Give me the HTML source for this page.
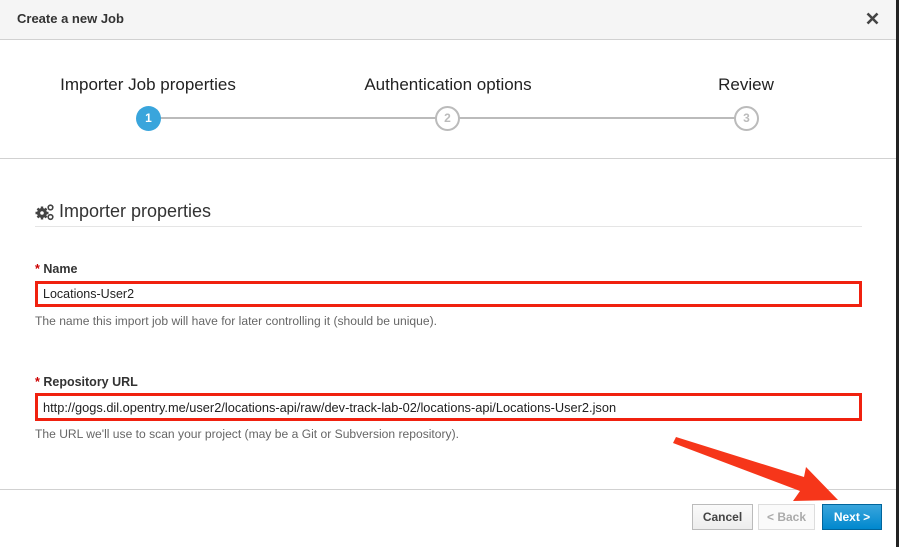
<!DOCTYPE html>
<html><head><style>
*{margin:0;padding:0;box-sizing:border-box}
body{width:899px;height:547px;background:#fff;font-family:"Liberation Sans",sans-serif;position:relative;overflow:hidden;color:#333}
.a{position:absolute}
</style></head><body>
<div class="a" style="left:0;top:0;width:896px;height:40px;background:#f5f5f5;border-bottom:1px solid #d1d1d1"></div>
<div class="a" style="left:17px;top:11px;font-size:13px;font-weight:bold;color:#333">Create a new Job</div>
<svg class="a" style="left:866px;top:12px" width="13" height="13"><path d="M1.5 1.5L11.5 11.5M11.5 1.5L1.5 11.5" stroke="#444" stroke-width="2.6"/></svg>
<div class="a" style="left:896px;top:0;width:3px;height:547px;background:#222"></div>

<div class="a" style="left:148px;top:117px;width:598px;height:2px;background:#bbb"></div>
<div class="a" style="left:30px;top:75px;width:236px;text-align:center;font-size:17px;color:#222">Importer Job properties</div>
<div class="a" style="left:330px;top:75px;width:236px;text-align:center;font-size:17px;color:#222">Authentication options</div>
<div class="a" style="left:628px;top:75px;width:236px;text-align:center;font-size:17px;color:#222">Review</div>
<div class="a" style="left:136px;top:106px;width:25px;height:25px;border-radius:50%;background:#39a5dc;color:#fff;font-size:12px;font-weight:bold;text-align:center;line-height:25px">1</div>
<div class="a" style="left:435px;top:106px;width:25px;height:25px;border-radius:50%;background:#fff;border:2px solid #bbb;color:#bbb;font-size:12px;font-weight:bold;text-align:center;line-height:21px">2</div>
<div class="a" style="left:734px;top:106px;width:25px;height:25px;border-radius:50%;background:#fff;border:2px solid #bbb;color:#bbb;font-size:12px;font-weight:bold;text-align:center;line-height:21px">3</div>
<div class="a" style="left:0;top:158px;width:896px;height:1px;background:#d1d1d1"></div>

<svg class="a" style="left:35px;top:203px" width="20" height="18">
<g fill="#444"><circle cx="7" cy="10" r="5"/><g stroke="#444" stroke-width="2.4"><path d="M7 3.5V16.5M0.5 10H13.5M2.5 5.5L11.5 14.5M11.5 5.5L2.5 14.5"/></g></g>
<circle cx="7" cy="10" r="1.8" fill="#fff"/>
<g fill="none" stroke="#444" stroke-width="1.6"><circle cx="15.5" cy="4.5" r="2.3"/><circle cx="15.5" cy="14" r="2.3"/></g>
</svg>
<div class="a" style="left:59px;top:201px;font-size:18px;color:#333">Importer properties</div>
<div class="a" style="left:35px;top:226px;width:827px;height:1px;background:#e5e5e5"></div>

<div class="a" style="left:35px;top:262px;font-size:12.5px;font-weight:bold;color:#333"><span style="color:#c00">*</span> Name</div>
<div class="a" style="left:35px;top:281px;width:827px;height:26px;border:3px solid #f0210f;background:#fff;font-size:12.5px;padding:3px 5px;color:#222">Locations-User2</div>
<div class="a" style="left:35px;top:314px;font-size:12.1px;color:#666">The name this import job will have for later controlling it (should be unique).</div>

<div class="a" style="left:35px;top:375px;font-size:12.5px;font-weight:bold;color:#333"><span style="color:#c00">*</span> Repository URL</div>
<div class="a" style="left:35px;top:393px;width:827px;height:28px;border:3px solid #f0210f;background:#fff;font-size:12.8px;padding:4px 5px;color:#222;white-space:nowrap">http://gogs.dil.opentry.me/user2/locations-api/raw/dev-track-lab-02/locations-api/Locations-User2.json</div>
<div class="a" style="left:35px;top:427px;font-size:12.1px;color:#666">The URL we'll use to scan your project (may be a Git or Subversion repository).</div>

<div class="a" style="left:0;top:489px;width:896px;height:1px;background:#d1d1d1"></div>
<div class="a" style="left:692px;top:504px;width:61px;height:26px;border:1px solid #bbb;background:linear-gradient(#fafafa,#ededed);font-size:12px;font-weight:bold;color:#444;text-align:center;line-height:24px">Cancel</div>
<div class="a" style="left:758px;top:504px;width:57px;height:26px;border:1px solid #ddd;background:#fafafa;font-size:12px;font-weight:bold;color:#aaa;text-align:center;line-height:24px">&lt; Back</div>
<div class="a" style="left:822px;top:504px;width:60px;height:26px;border:1px solid #00659c;background:linear-gradient(#39a5dc,#0088ce);font-size:12px;font-weight:bold;color:#fff;text-align:center;line-height:24px">Next &gt;</div>

<svg class="a" style="left:0;top:0" width="899" height="547">
<polygon points="673,443 676,437 804,477 806,467 838,500 793,501 800,491" fill="#f6361a"/>
</svg>
</body></html>
